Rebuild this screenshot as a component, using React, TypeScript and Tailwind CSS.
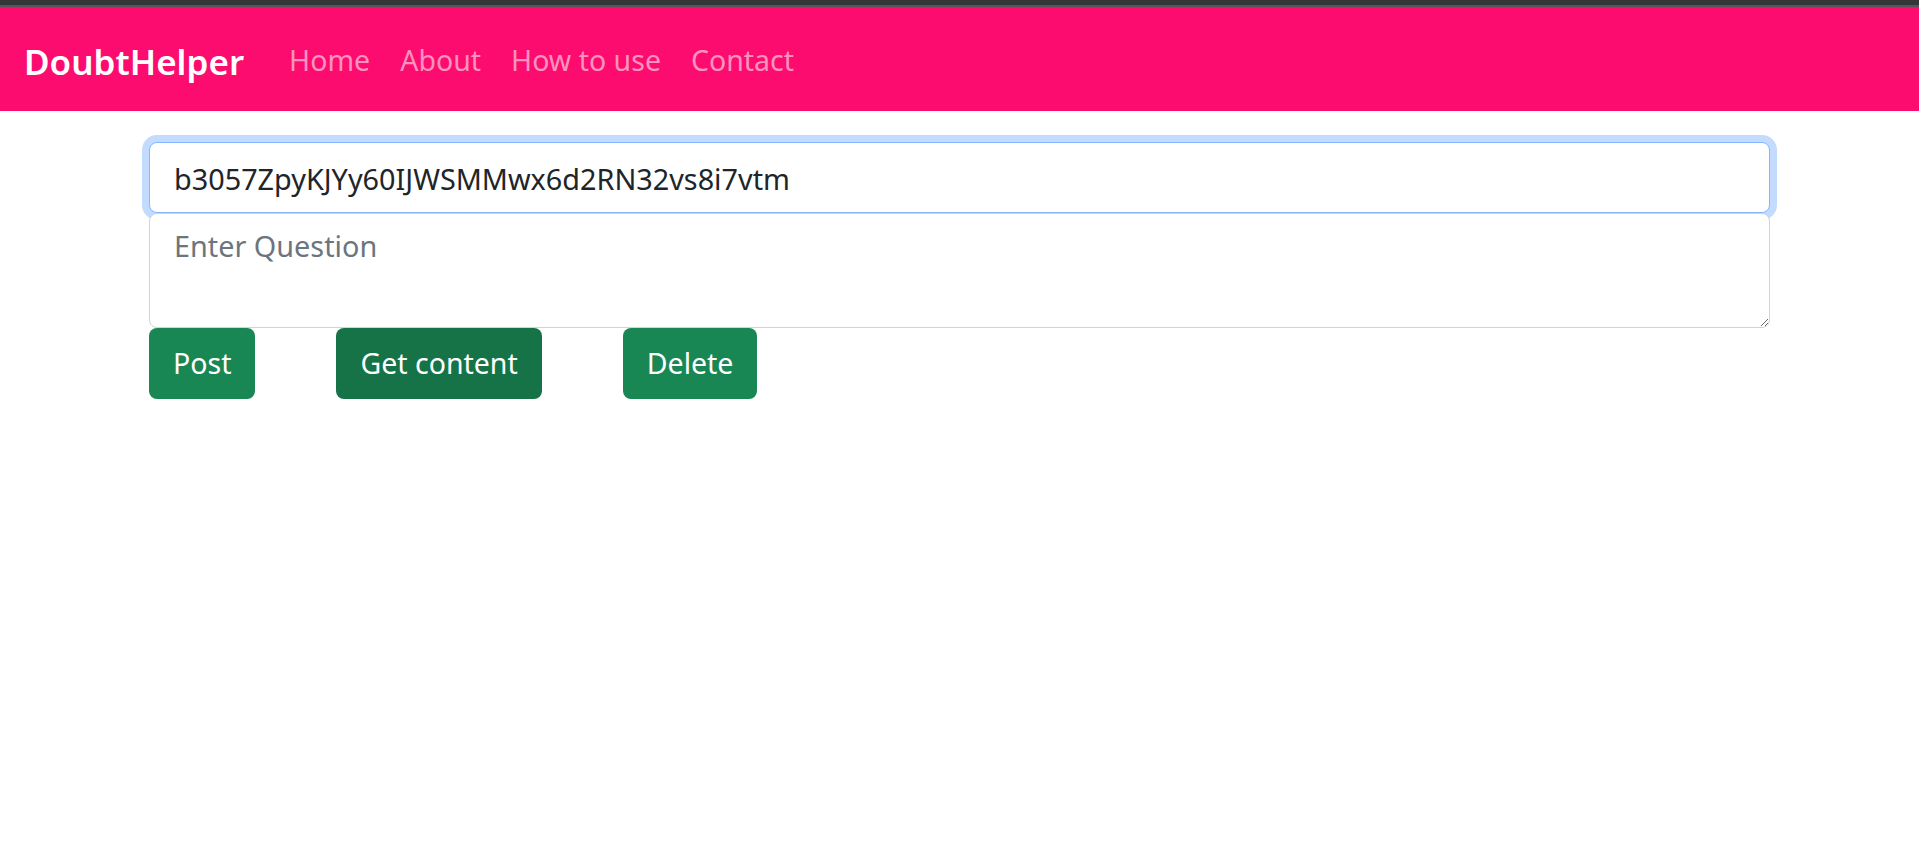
import React from "react";

const links = ["Home", "About", "How to use", "Contact"];

function NavBar() {
    return <nav className="h-[104px] bg-[#fc0c6e] flex items-center px-[24px] pt-[4px]">
        <a href="#" className="text-[35px] font-semibold text-white mr-[30px] leading-none">DoubtHelper</a>
        <ul className="flex items-center">
            {links.map(link => <li key={link}>
                <a href="#" className="px-[15px] text-[28.5px] text-[#fd92be] leading-none">{link}</a>
            </li>)}
        </ul>
    </nav>
}

export default function App() {
    return <div className="min-h-screen bg-white font-['Noto_Sans',sans-serif]">
        <div className="h-[5px] bg-[#35363a]"/>
        <div className="h-[2px] bg-[#56575b]"/>
        <NavBar/>
        <div className="mx-[149px] mt-[31px]">
            <input type="text"
                   defaultValue="b3057ZpyKJYy60IJWSMMwx6d2RN32vs8i7vtm"
                   className="block w-full h-[71px] px-[24px] pt-[2px] text-[28.8px] text-[#212529] bg-white border border-[#86b7fe] rounded-[8px] outline-none shadow-[0_0_0_7px_#c2dbfe]"/>
            <textarea placeholder="Enter Question"
                      className="block w-full h-[115px] px-[24px] py-[10px] text-[28.8px] text-[#212529] placeholder:text-[#6c757d] bg-white border border-[#ced4da] rounded-[8px] outline-none"/>
            <div className="flex gap-[81px]">
                <button className="h-[71px] px-[24px] rounded-[8px] bg-[#198754] text-white text-[28.5px]">Post</button>
                <button className="h-[71px] px-[24px] rounded-[8px] bg-[#157347] text-white text-[28.5px]">Get content</button>
                <button className="h-[71px] px-[24px] rounded-[8px] bg-[#198754] text-white text-[28.5px]">Delete</button>
            </div>
        </div>
    </div>
}
